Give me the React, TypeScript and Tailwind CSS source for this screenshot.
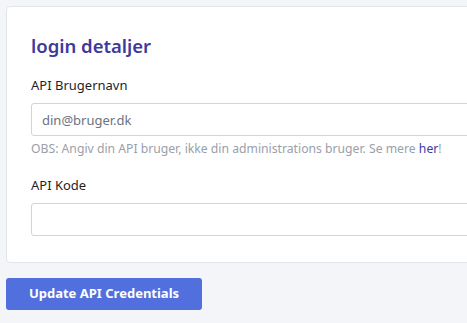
import React from "react";

const font = { fontFamily: '"Noto Sans", "Open Sans", sans-serif' };

const Field = ({
  label,
  placeholder,
  children,
}: {
  label: string;
  placeholder?: string;
  children?: React.ReactNode;
}) => (
  <div className="flex flex-col">
    <label className="text-[13px] leading-5 text-[#1f2328]">{label}</label>
    <input
      className="mt-[8px] h-[33px] w-full rounded-[3px] border border-[#d1d5db] bg-white px-[10px] text-[13px] text-[#374151] placeholder:text-[#6b7280] outline-none"
      placeholder={placeholder}
    />
    {children}
  </div>
);

export default function App() {
  return (
    <div
      className="h-[323px] w-[467px] overflow-hidden bg-[#f4f5f9] pl-[6px] pt-[6px]"
      style={font}
    >
      <div className="w-[620px] rounded-[4px] border border-[#e3e5ea] bg-white px-[24px] pb-[26px] pt-[25px]">
        <h2 className="text-[18.5px] font-semibold leading-7 text-[#3d3a9e]">
          login detaljer
        </h2>
        <div className="mt-[15px]">
          <Field label="API Brugernavn" placeholder="din@bruger.dk">
            <p className="mt-[3px] text-[12.2px] leading-5 text-[#9aa0a9]">
              OBS: Angiv din API bruger, ikke din administrations bruger. Se mere{" "}
              <a className="text-[#3d3a9e]" href="#">
                her
              </a>
              !
            </p>
          </Field>
        </div>
        <div className="mt-[16px]">
          <Field label="API Kode" />
        </div>
      </div>
      <button className="mt-[15px] h-[32px] w-[196px] rounded-[3px] bg-[#5170de] text-[13px] font-bold text-white">
        Update API Credentials
      </button>
    </div>
  );
}
